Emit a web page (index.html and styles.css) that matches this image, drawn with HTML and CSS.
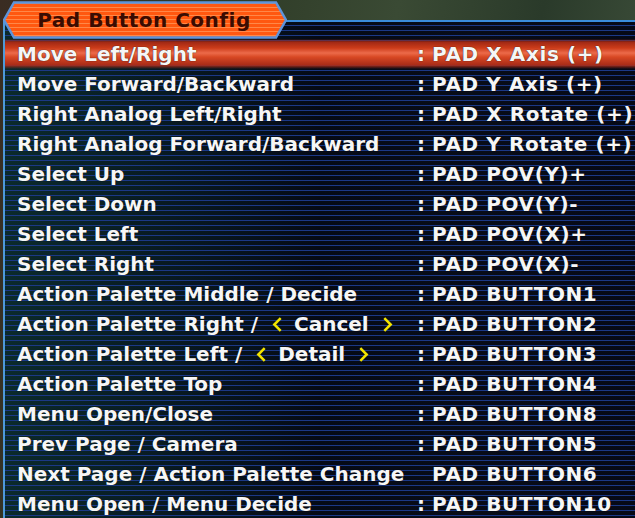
FILE: index.html
```html
<!DOCTYPE html>
<html>
<head>
<meta charset="utf-8">
<link rel="stylesheet" href="styles.css">
</head>
<body>
<div class="scene">
  <div class="panel">
    <div class="list">
      <div class="row sel"><span class="lbl">Move Left/Right</span><span class="col">:</span><span class="val">PAD X Axis (+)</span></div>
      <div class="row"><span class="lbl">Move Forward/Backward</span><span class="col">:</span><span class="val">PAD Y Axis (+)</span></div>
      <div class="row"><span class="lbl">Right Analog Left/Right</span><span class="col">:</span><span class="val">PAD X Rotate (+)</span></div>
      <div class="row"><span class="lbl">Right Analog Forward/Backward</span><span class="col">:</span><span class="val">PAD Y Rotate (+)</span></div>
      <div class="row"><span class="lbl">Select Up</span><span class="col">:</span><span class="val">PAD POV(Y)+</span></div>
      <div class="row"><span class="lbl">Select Down</span><span class="col">:</span><span class="val">PAD POV(Y)-</span></div>
      <div class="row"><span class="lbl">Select Left</span><span class="col">:</span><span class="val">PAD POV(X)+</span></div>
      <div class="row"><span class="lbl">Select Right</span><span class="col">:</span><span class="val">PAD POV(X)-</span></div>
      <div class="row"><span class="lbl">Action Palette Middle / Decide</span><span class="col">:</span><span class="val">PAD BUTTON1</span></div>
      <div class="row"><span class="lbl">Action Palette Right /<svg class="chev" viewBox="0 0 10 16"><polyline points="8,2 2,8 8,14"/></svg>Cancel<svg class="chev" viewBox="0 0 10 16"><polyline points="2,2 8,8 2,14"/></svg></span><span class="col">:</span><span class="val">PAD BUTTON2</span></div>
      <div class="row"><span class="lbl">Action Palette Left /<svg class="chev" viewBox="0 0 10 16"><polyline points="8,2 2,8 8,14"/></svg>Detail<svg class="chev" viewBox="0 0 10 16"><polyline points="2,2 8,8 2,14"/></svg></span><span class="col">:</span><span class="val">PAD BUTTON3</span></div>
      <div class="row"><span class="lbl">Action Palette Top</span><span class="col">:</span><span class="val">PAD BUTTON4</span></div>
      <div class="row"><span class="lbl">Menu Open/Close</span><span class="col">:</span><span class="val">PAD BUTTON8</span></div>
      <div class="row"><span class="lbl">Prev Page / Camera</span><span class="col">:</span><span class="val">PAD BUTTON5</span></div>
      <div class="row"><span class="lbl">Next Page / Action Palette Change</span><span class="col"></span><span class="val">PAD BUTTON6</span></div>
      <div class="row"><span class="lbl">Menu Open / Menu Decide</span><span class="col">:</span><span class="val">PAD BUTTON10</span></div>
    </div>
  </div>
  <div class="tab">
    <svg class="tab-shape" viewBox="0 0 284 38" width="284" height="38">
      <defs>
        <pattern id="stripes" width="4" height="4" patternUnits="userSpaceOnUse">
          <rect width="4" height="4" fill="#ff5810"/>
          <rect y="2" width="4" height="1" fill="#ff8848"/>
        </pattern>
      </defs>
      <polygon points="1,19 11,1.5 273,1.5 283,19 273,36.5 11,36.5" fill="url(#stripes)" stroke="#5e94da" stroke-width="2.5"/>
    </svg>
    <span class="tab-title">Pad Button Config</span>
  </div>
</div>
</body>
</html>
```

FILE: styles.css
```css
html, body {
  margin: 0;
  padding: 0;
  width: 635px;
  height: 518px;
  overflow: hidden;
  background: #1c2a1c;
}

.scene {
  position: relative;
  width: 635px;
  height: 518px;
  background:
    linear-gradient(100deg, #3a2c22 0%, #2e3a26 30%, #3a4a34 55%, #2a3a2a 75%, #445640 100%);
  display: flex;
  flex-direction: column;
  padding-top: 20px;
  box-sizing: border-box;
  font-family: "DejaVu Sans", "Verdana", sans-serif;
  font-weight: bold;
}

.panel {
  flex: 1;
  margin-left: 3px;
  border-top: 2px solid #3a8ddc;
  border-left: 2px solid #4e9ad8;
  background:
    repeating-linear-gradient(180deg, rgba(0,0,0,0) 0px, rgba(0,0,0,0) 3px, #1b3886 3px, #1b3886 4px, rgba(0,0,0,0) 4px, rgba(0,0,0,0) 5px),
    linear-gradient(90deg, #0b2a2c 0%, #081a22 25%, #050a16 50%, #080c18 75%, #060916 100%);
  padding-top: 17px;
}

.list {
  display: flex;
  flex-direction: column;
}

.row {
  display: grid;
  grid-template-columns: 399px 16px auto;
  align-items: center;
  height: 30px;
  padding-left: 12px;
  color: #f6f6f6;
  font-size: 20px;
  letter-spacing: 0;
  white-space: nowrap;
  text-shadow: 0 0 1px #000;
}

.row.sel {
  background:
    linear-gradient(180deg, rgba(120,20,10,0.0) 0px, #a02814 3px, #cc3c1a 9px, #ec6a4a 14px, #d84824 18px, #a82c18 26px, rgba(120,20,10,0) 30px);
}

.lbl {
  overflow: visible;
}

.col {
  text-align: left;
  padding-left: 1px;
}

.val {
  letter-spacing: 0.6px;
}

.chev {
  width: 11px;
  height: 17px;
  margin: 0 11px 0 14px;
  vertical-align: -2px;
}

.chev + .chev {
  margin: 0;
}

.lbl .chev:last-child {
  margin: 0 0 0 13px;
}

.chev polyline {
  fill: none;
  stroke: #f2e400;
  stroke-width: 2.4;
  stroke-linejoin: miter;
}

.tab {
  position: absolute;
  left: 3px;
  top: 1px;
  width: 284px;
  height: 38px;
  display: flex;
  align-items: center;
  justify-content: center;
}

.tab-shape {
  position: absolute;
  left: 0;
  top: 0;
}

.tab-title {
  position: relative;
  color: #3a0c02;
  font-size: 20px;
  letter-spacing: 0.5px;
  padding-right: 2px;
}
```
